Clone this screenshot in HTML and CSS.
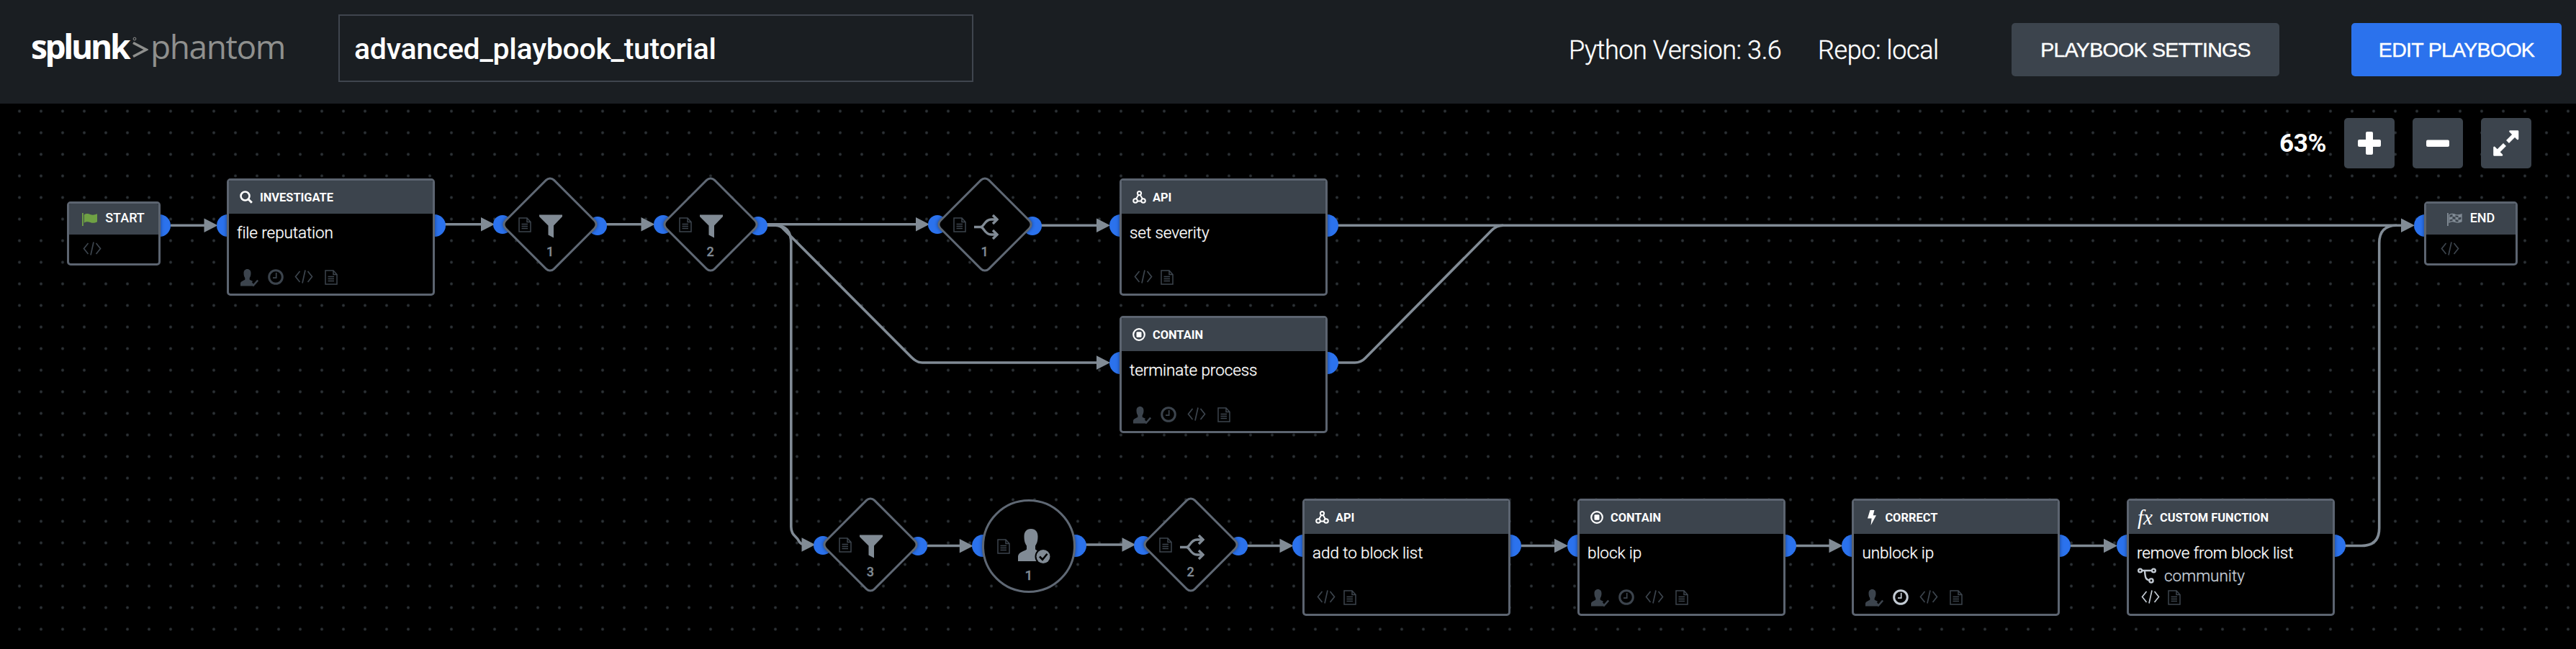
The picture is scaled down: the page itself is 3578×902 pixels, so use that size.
FILE: index.html
```html
<!DOCTYPE html>
<html lang="en">
<head>
<meta charset="utf-8">
<title>advanced_playbook_tutorial</title>
<link rel="stylesheet" href="styles.css">
</head>
<body>
<svg class="defs" aria-hidden="true">
  <defs>
    <symbol id="i-code" viewBox="0 0 26 19"><path d="M7.5 2 1.5 9.5l6 7.5M18.5 2l6 7.5-6 7.5M15 .5 11 18.5" fill="none" stroke="currentColor" stroke-width="1.7"/></symbol>
    <symbol id="i-doc" viewBox="0 0 18 21"><path d="M1 1h11l5 5.500v13.500H1zM12 1v5.500h5M4.500 9.500h8.500M4.500 12.500h8.500M4.500 15.500h8.500" fill="none" stroke="currentColor" stroke-width="1.500"/></symbol>
    <symbol id="i-clock" viewBox="0 0 22 22"><circle cx="11" cy="11" r="9.300" fill="none" stroke="currentColor" stroke-width="3"/><path d="M11.700 5v7.200H7" fill="none" stroke="currentColor" stroke-width="1.700"/></symbol>
    <symbol id="i-user" viewBox="0 0 25 24"><path d="M9.500 0c3.200 0 5 2.300 5 5.500 0 3-.7 5.500-1.800 6.800v2.400l4.600 2.300-2 1.500 3 5H0v-3.500C0 17.500 2.500 16.700 6.300 14.700v-2.400C5.200 11 4.500 8.500 4.500 5.500 4.500 2.300 6.300 0 9.500 0z" fill="currentColor"/><path d="m14.500 18.500 3.500 4 6.200-7" fill="none" stroke="currentColor" stroke-width="2.600"/></symbol>
    <symbol id="i-search" viewBox="0 0 18 18"><circle cx="7.500" cy="7.500" r="6" fill="none" stroke="currentColor" stroke-width="2.600"/><path d="m11.800 11.800 5 5" stroke="currentColor" stroke-width="3"/></symbol>
    <symbol id="i-api" viewBox="0 0 19 18"><g fill="none" stroke="currentColor" stroke-width="2"><path d="M8.200 6 5 11.500M10.800 6 14 11.500M7 14.500h5"/><circle cx="9.500" cy="3.600" r="2.600"/><circle cx="4" cy="14" r="2.800"/><circle cx="15" cy="14" r="2.800"/></g></symbol>
    <symbol id="i-contain" viewBox="0 0 18 18"><circle cx="9" cy="9" r="7.800" fill="none" stroke="currentColor" stroke-width="2.200"/><rect x="5.500" y="5.300" width="7" height="7.400" rx="1.200" fill="currentColor"/></symbol>
    <symbol id="i-bolt" viewBox="0 0 12 21"><path d="M3.500 0h6L7.700 7.200H12L4.600 21l1-9.500H0z" fill="currentColor"/></symbol>
    <symbol id="i-flag" viewBox="0 0 21 18"><path d="M0 0h1.800v18H0z" fill="currentColor"/><path d="M2.800 2.500c3-2.300 6-1.700 8.500-.6 3 1.200 6 .9 9.700-.7v11c-3.500 1.800-6.500 2-9.700.7-3-1.100-5.700-1-8.500.8z" fill="currentColor"/></symbol>
    <symbol id="i-checkers" viewBox="0 0 21 18"><path d="M0 0h1.800v18H0z" fill="currentColor"/><path d="M3 2.800c3-2 6-1.500 8.300-.5 3 1.200 5.700.9 8.700-.5v9.900c-3 1.600-5.700 1.800-8.700.6-2.600-1-5.500-.9-8.300.7z" fill="none" stroke="currentColor" stroke-width="1.300"/><path d="M7.500 1.500 11.500 2v3.600l-4-.5zM15.500 3l4.500-1v3.500l-4.500 1zM3 6l4.500-1v3.500L3 9.500zM11.500 5.600l4 .7v3.500l-4-.7zM7.500 8.600l4 .5v3.500l-4-.6zM15.500 9.800l4.500-1v3.500l-4.500 1z" fill="currentColor"/></symbol>
    <symbol id="i-funnel" viewBox="0 0 32 32"><path d="M0 0h32v2.500L20 15v17l-7.500-4V15L0 2.500z" fill="currentColor"/></symbol>
    <symbol id="i-fork" viewBox="0 0 34 35"><path d="M0 17.500h9c5 0 5-10.500 15-10.500h8M9 17.500c5 0 5 10.500 15 10.500h8" fill="none" stroke="currentColor" stroke-width="3.400"/><path d="m26 1 6 6-6 6M26 22l6 6-6 6" fill="none" stroke="currentColor" stroke-width="3.400"/></symbol>
    <symbol id="i-prompt" viewBox="0 0 46 48"><path d="M18 0c6.500 0 9.500 4.300 9.500 10.500 0 6-1 9.500-3.500 13v5c3 2.500 11 4 12 9.500v7H0v-7c1-6 9-7 12-9.500v-5c-2.500-3.500-3.500-7-3.500-13C8.500 4.300 11.500 0 18 0z" fill="currentColor"/><circle cx="35" cy="38.500" r="11.500" fill="#000"/><circle cx="35" cy="38.500" r="9.500" fill="currentColor"/><path d="m30 38.500 4 4.200 6.500-8" fill="none" stroke="#000" stroke-width="2.600"/></symbol>
    <symbol id="i-repo" viewBox="0 0 26 22"><g fill="none" stroke="currentColor" stroke-width="2.400"><path d="M6 4h14M10 4c.5 9 1 13 7 13.500"/><circle cx="3.600" cy="4" r="2.400"/><circle cx="22.400" cy="4" r="2.400"/><circle cx="19" cy="18" r="2.600"/></g></symbol>
    <symbol id="i-expand" viewBox="0 0 36 36"><g fill="#fff" stroke="#fff" stroke-linejoin="round"><path d="M23.500 1.500H34V12zM1.500 24v10.500H12z" stroke-width="2.600"/><path d="m29 7-9 9M7 29l9-9" stroke-width="5.600"/></g></symbol>
  </defs>
</svg>

<header class="topbar">
  <div class="logo"><b class="logo-splunk">splunk</b><svg class="logo-mark" viewBox="0 0 22 32"><circle cx="3" cy="4" r="1.900" fill="none" stroke="currentColor" stroke-width="1"/><path d="M1 9.500 19 19 1 28.500" fill="none" stroke="currentColor" stroke-width="3.600"/></svg><span class="logo-phantom">phantom</span></div>
  <div class="name-field">advanced_playbook_tutorial</div>
  <div class="meta"><span class="python">Python Version: 3.6</span><span class="repo">Repo: local</span></div>
  <button class="btn btn-settings">PLAYBOOK SETTINGS</button>
  <button class="btn btn-edit">EDIT PLAYBOOK</button>
</header>

<main class="canvas" id="canvas">
  <svg class="wires" viewBox="0 144 3578 758">
    <g fill="none" stroke="currentColor" stroke-width="3.600">
      <path d="M237 313.300H286M618 311.700H670M842 311.700H893M1062 311.700H1275M1446 313.300H1526M1858 313.300H3338"/>
      <path d="M1064 313.300H1077Q1084 313.300 1089 319L1266 496.500Q1273.500 504 1281 504H1526"/>
      <path d="M1064 313.300H1077C1092 313.300 1098.800 322 1098.800 338V732C1098.800 744 1106 745 1109 751Q1112 757 1118 757"/>
      <path d="M1858 504H1882Q1890 504 1896 498L2072 320Q2079 313.300 2088 313.300"/>
      <path d="M1288 758.500H1336M1508 757H1562M1732 758.500H1780M2113 758.500H2162M2494 758.500H2544M2876 758.500H2925"/>
      <path d="M3257 758.500H3280Q3304.700 758.500 3304.700 734V338Q3304.700 313.300 3329 313.300"/>
    </g>
    <g fill="currentColor">
      <path d="M283.500 303.500v19.600l19-9.800zM668 301.900v19.600l19-9.800zM890.500 301.900v19.600l19-9.800zM1272 301.900v19.600l19-9.800zM1523 303.500v19.600l19-9.800zM1523 494.200v19.600l19-9.800zM3335 303.500v19.600l19-9.800z"/>
      <path d="M1113.500 747.200v19.600l19-9.800zM1332.800 748.900v19.600l19-9.800zM1558.500 747.200v19.600l19-9.800zM1777.500 748.700v19.600l19-9.800zM2159 748.700v19.600l19-9.800zM2540.500 748.700v19.600l19-9.800zM2922 748.700v19.600l19-9.800z"/>
    </g>
  </svg>

  <div class="zoom">
    <span class="zoom-level">63%</span>
    <button class="zbtn"><svg width="32" height="32" viewBox="0 0 32 32"><path d="M13 0h6q2 0 2 2v9h9q2 0 2 2v6q0 2-2 2h-9v9q0 2-2 2h-6q-2 0-2-2v-9H2q-2 0-2-2v-6q0-2 2-2h9V2q0-2 2-2z" fill="#fff"/></svg></button>
    <button class="zbtn"><svg width="32" height="32" viewBox="0 0 32 32"><rect y="11.500" width="32" height="9.500" rx="2" fill="#fff"/></svg></button>
    <button class="zbtn"><svg width="36" height="36"><use href="#i-expand"/></svg></button>
  </div>
</main>
<script src="nodes.js"></script>
</body>
</html>
```
FILE: nodes.js
```js
const icon = (name, w, h, cls = "") =>
  `<svg class="ic ${cls}" width="${w}" height="${h}"><use href="#i-${name}"/></svg>`;

const tools = {
  user: c => icon("user", 25, 24, "t-user " + c),
  clock: c => icon("clock", 22, 22, "t-clock " + c),
  code: c => icon("code", 26, 19, "t-code " + c),
  doc: c => icon("doc", 18, 21, "t-doc " + c)
};

const headIcons = {
  search: icon("search", 18, 18),
  api: icon("api", 19, 18),
  contain: icon("contain", 18, 18),
  bolt: icon("bolt", 12, 21, "bolt"),
  fx: '<i class="fx">fx</i>'
};

const nodes = [
  { kind: "end", x: 92.5, y: 280, title: "START", flag: "flag", side: "r" },
  { kind: "end", x: 3367, y: 280, title: "END", flag: "checkers", side: "l" },
  { kind: "block", x: 315, y: 248, head: "search", type: "INVESTIGATE", title: "file reputation", bar: "user clock code doc" },
  { kind: "block", x: 1555, y: 248, head: "api", type: "API", title: "set severity", bar: "code doc" },
  { kind: "block", x: 1555, y: 439, head: "contain", type: "CONTAIN", title: "terminate process", bar: "user clock code doc" },
  { kind: "block", x: 1809, y: 693.3, head: "api", type: "API", title: "add to block list", bar: "code doc" },
  { kind: "block", x: 2191, y: 693.3, head: "contain", type: "CONTAIN", title: "block ip", bar: "user clock code doc" },
  { kind: "block", x: 2572.4, y: 693.3, head: "bolt", type: "CORRECT", title: "unblock ip", bar: "user clock code doc", on: "clock" },
  { kind: "block", x: 2954, y: 693.3, head: "fx", type: "CUSTOM FUNCTION", title: "remove from block list", repo: "community", bar: "code doc", on: "code" },
  { kind: "diamond", x: 764, y: 311.5, glyph: "funnel", n: 1 },
  { kind: "diamond", x: 986.5, y: 311.5, glyph: "funnel", n: 2 },
  { kind: "diamond", x: 1367.6, y: 311.5, glyph: "fork", n: 1 },
  { kind: "diamond", x: 1208.8, y: 757, glyph: "funnel", n: 3 },
  { kind: "diamond", x: 1653.6, y: 757, glyph: "fork", n: 2 },
  { kind: "circle", x: 1429, y: 758.5, glyph: "prompt", n: 1 }
];

function render(n) {
  if (n.kind === "end") {
    return `<i class="port ${n.side}"></i><div class="box"><div class="head">${icon(n.flag, 21, 18, n.flag)}<span>${n.title}</span></div><div class="bar">${tools.code("")}</div></div>`;
  }
  if (n.kind === "block") {
    const bar = n.bar.split(" ").map(t => tools[t](t === n.on ? "on" : "")).join("");
    const repo = n.repo ? `<div class="community">${icon("repo", 26, 22)}<span>${n.repo}</span></div>` : "";
    return `<i class="port l"></i><i class="port r"></i><div class="box"><div class="head ${n.head}"><span class="hi">${headIcons[n.head]}</span><span>${n.type}</span></div><div class="title">${n.title}</div>${repo}<div class="bar">${bar}</div></div>`;
  }
  const size = { funnel: [32, 33], fork: [34, 35], prompt: [46, 48] }[n.glyph];
  return `<i class="port l"></i><i class="port r"></i><i class="shape"></i><div class="face"><div class="glyphs">${icon("doc", 18, 21)}${icon(n.glyph, size[0], size[1], n.glyph)}</div><span class="num">${n.n}</span></div>`;
}

const canvas = document.getElementById("canvas");
for (const n of nodes) {
  const el = document.createElement("div");
  el.className = "node " + n.kind;
  el.style.left = n.x + "px";
  el.style.top = n.y - 144 + "px";
  el.innerHTML = render(n);
  canvas.append(el);
}
```
FILE: styles.css
```css
* { box-sizing: border-box; }
body { margin: 0; width: 3578px; height: 902px; overflow: hidden; background: #000; color: #fff; font-family: Roboto, "Liberation Sans", sans-serif; }
.defs { position: absolute; width: 0; height: 0; }
button { border: 0; padding: 0; color: #fff; background: #3c444d; border-radius: 5px; }

.topbar { height: 144px; background: #1a1e22; display: flex; align-items: flex-start; padding-left: 43px; }
.logo { width: 427px; padding-top: 38px; display: flex; line-height: 52px; white-space: nowrap; }
.logo-splunk { width: 141px; font: 700 46px/52px "Open Sans", sans-serif; letter-spacing: -3.300px; }
.logo-mark { width: 22px; height: 32px; margin: 12px 3px 0 0; color: #8f908e; }
.logo-phantom { font: 400 46px/52px "Open Sans", sans-serif; letter-spacing: -1.400px; color: #8f908e; }
.name-field { width: 882px; height: 94px; margin-top: 20px; border: 2px solid #3f454e; padding: 0 20px; font-size: 41px; font-weight: 500; line-height: 92px; letter-spacing: -.28px; }
.meta { width: 1442px; padding-left: 827px; padding-top: 47px; display: flex; gap: 52px; font-size: 36px; font-weight: 300; line-height: 46px; white-space: nowrap; letter-spacing: -.4px; -webkit-text-stroke: .4px #fff; }
.python { width: 294px; }
.btn { height: 74px; margin-top: 32px; font: 400 28.500px/72px "Liberation Sans", sans-serif; letter-spacing: -.7px; -webkit-text-stroke: .4px #fff; white-space: nowrap; flex: none; }
.btn-settings { width: 372px; }
.btn-edit { width: 292px; margin-left: 100px; background: #2b72ed; }

.canvas { position: relative; height: 758px; background: #000 radial-gradient(circle at 12px 10.500px, #30363a 0, #282d31 1.300px, transparent 2.700px) 15px 0 / 30px 30px; }
.wires { position: absolute; left: 0; top: 0; width: 3578px; height: 758px; color: #818b95; }
.zoom { position: absolute; right: 62px; top: 20px; display: flex; gap: 25px; align-items: center; }
.zoom-level { width: 65px; font-size: 35px; font-weight: 700; letter-spacing: -.3px; white-space: nowrap; }
.zbtn { width: 70px; height: 70px; display: flex; align-items: center; justify-content: center; }

.node { position: absolute; }
.ic { display: block; flex: none; color: #3c444d; }
.port { position: absolute; width: 31px; height: 31px; border-radius: 50%; background: #2b72ed; }
.box { position: relative; width: 100%; height: 100%; border: 3px solid #5c6470; border-radius: 5px; background: #000; overflow: hidden; display: flex; flex-direction: column; box-shadow: 0 0 5px rgba(0,0,0,.45); }
.head { display: flex; align-items: center; background: #3c444d; flex: none; }
.head .ic { color: #fff; }

.end { width: 130px; height: 89px; }
.end .port { top: 17.500px; }
.end .port.r { right: -14.500px; }
.end .port.l { left: -14.500px; }
.end .head { height: 43px; justify-content: center; gap: 11px; padding: 0 0 5px 0; font-size: 18px; font-weight: 500; }
.end .head .flag { color: #6fa144; margin-top: 5px; }
.end .head .checkers { color: #818b95; margin-top: 5px; }
.end .bar { padding: 10px 0 0 19.500px; }

.block { width: 289px; height: 162.500px; }
.block .port { top: 49.500px; }
.block .port.l { left: -14.500px; }
.block .port.r { right: -14.500px; }
.block .head { height: 46px; padding: 0 0 0 15px; font-size: 16.400px; font-weight: 700; }
.hi { width: 28px; height: 22px; display: flex; align-items: center; }
.hi .bolt { margin-left: 4px; }
.head.fx .hi { margin-left: -3px; width: 31px; }
i.fx { font: italic 400 29px/22px "Liberation Serif", serif; }
.title { padding: 13px 0 0 11px; height: 42px; font-size: 22.500px; font-weight: 300; line-height: 27px; letter-spacing: -.08px; color: #fff; white-space: nowrap; -webkit-text-stroke: .3px #fff; }
.community { position: absolute; left: 12px; top: 91px; display: flex; gap: 11px; align-items: center; color: #c9d1da; font-size: 22.500px; line-height: 26px; font-weight: 300; -webkit-text-stroke: .3px #c9d1da; }
.community .ic { color: #c3cbd4; }
.block .bar { position: absolute; left: 15.500px; top: 123px; height: 24px; display: flex; align-items: flex-start; }
.t-user { margin-right: 13px; }
.t-clock { margin-right: 15.500px; }
.block .t-code { margin: 1px 16px 0 0; }
.block .t-code:first-child { margin-right: 11px; margin-left: 1px; }
.t-doc { margin-top: 1px; }
.ic.on { color: #c3cbd4; }

.diamond, .circle { width: 0; height: 0; }
.shape { position: absolute; width: 98px; height: 98px; left: -49px; top: -49px; border: 3px solid #5f6874; border-radius: 9px; background: #000; transform: rotate(45deg); box-shadow: 0 0 5px rgba(0,0,0,.45); }
.circle .shape { width: 130px; height: 130px; left: -65px; top: -65px; border-radius: 50%; transform: none; }
.diamond .port { width: 26px; height: 26px; top: -12.500px; }
.diamond .port.l { left: -79px; }
.diamond .port.r { left: 53px; top: -11px; }
.circle .port { top: -15.500px; }
.circle .port.l { left: -79.500px; }
.circle .port.r { left: 48.500px; }
.face { position: absolute; left: -44px; top: -16px; width: 88px; color: #818b95; }
.glyphs { display: flex; gap: 11px; align-items: flex-start; height: 46px; }
.glyphs .ic:first-child { margin-top: 6px; }
.glyphs .funnel, .glyphs .fork { color: #818b95; margin-top: 2px; }
.glyphs .prompt { color: #818b95; margin-top: -8px; }
.num { display: block; text-align: center; font-size: 18px; line-height: 21px; font-weight: 500; margin-top: -3px; -webkit-text-stroke: .3px #818b95; }
.circle .num { margin-top: 0; font-size: 19px; }
```
